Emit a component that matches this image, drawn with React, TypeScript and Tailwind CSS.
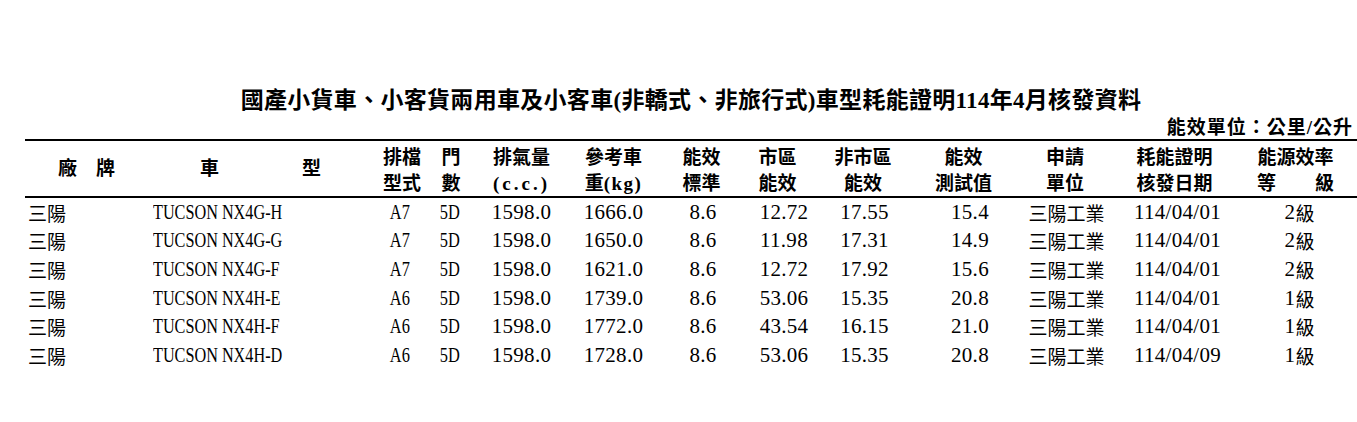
import React from 'react';

const COLS =
  'grid grid-cols-[123px_222px_60px_40px_103px_81px_98px_64px_97px_114px_79px_143px_101px]';

const SERIF = "font-['Liberation_Serif','Noto_Sans_CJK_TC',serif]";
const CJK = "font-['Noto_Sans_CJK_TC','Noto_Sans_CJK_JP',sans-serif]";

type Row = {
  model: string;
  gear: string;
  weight: string;
  city: string;
  highway: string;
  test: string;
  date: string;
  grade: string;
};

const ROWS: Row[] = [
  { model: 'TUCSON NX4G-H', gear: 'A7', weight: '1666.0', city: '12.72', highway: '17.55', test: '15.4', date: '114/04/01', grade: '2' },
  { model: 'TUCSON NX4G-G', gear: 'A7', weight: '1650.0', city: '11.98', highway: '17.31', test: '14.9', date: '114/04/01', grade: '2' },
  { model: 'TUCSON NX4G-F', gear: 'A7', weight: '1621.0', city: '12.72', highway: '17.92', test: '15.6', date: '114/04/01', grade: '2' },
  { model: 'TUCSON NX4H-E', gear: 'A6', weight: '1739.0', city: '53.06', highway: '15.35', test: '20.8', date: '114/04/01', grade: '1' },
  { model: 'TUCSON NX4H-F', gear: 'A6', weight: '1772.0', city: '43.54', highway: '16.15', test: '21.0', date: '114/04/01', grade: '1' },
  { model: 'TUCSON NX4H-D', gear: 'A6', weight: '1728.0', city: '53.06', highway: '15.35', test: '20.8', date: '114/04/09', grade: '1' },
];

// two-line header cell
const HeadCell: React.FC<{ top: React.ReactNode; bottom: React.ReactNode; className?: string }> = ({
  top,
  bottom,
  className = '',
}) => (
  <div className={`flex flex-col items-center ${className}`}>
    <div className="h-[26px] flex items-center">{top}</div>
    <div className="h-[26px] flex items-center">{bottom}</div>
  </div>
);

const Num: React.FC<{ children: React.ReactNode }> = ({ children }) => (
  <span className={`${SERIF} text-[21px] leading-none tracking-[0.3px]`}>{children}</span>
);

export default function App() {
  return (
    <div className="w-[1357px] h-[422px] bg-white text-black pl-[25px] pt-[85px] overflow-hidden">
      {/* title */}
      <h1 className={`${SERIF} h-[30px] flex items-center justify-center text-[23px] font-bold leading-none tracking-[0.3px]`}>
        國產小貨車、小客貨兩用車及小客車(非轎式、非旅行式)車型耗能證明114年4月核發資料
      </h1>
      <div className={`${SERIF} h-[24px] flex items-center justify-end pr-[4px] text-[19px] font-bold leading-none tracking-[1px]`}>
        能效單位：公里/公升
      </div>

      <div className="h-[2px] bg-black" />

      {/* header */}
      <div className={`${COLS} ${SERIF} pt-[3px] h-[55px] text-[19px] font-bold leading-none`}>
        <div className="flex items-center justify-center gap-[19px] pb-[3px]">
          <span>廠</span>
          <span>牌</span>
        </div>
        <div className="flex items-center justify-between pl-[52px] pr-[49px] pb-[3px]">
          <span>車</span>
          <span>型</span>
        </div>
        <HeadCell top="排檔" bottom="型式" className="pl-[4px]" />
        <HeadCell top="門" bottom="數" className="pl-[2px]" />
        <HeadCell top="排氣量" bottom={<span className="tracking-[3px]">(c.c.)</span>} />
        <HeadCell
          top="參考車"
          bottom={
            <span>
              重<span className="tracking-[1.5px]">(kg)</span>
            </span>
          }
        />
        <HeadCell top="能效" bottom="標準" className="pr-[3px]" />
        <HeadCell top="市區" bottom="能效" className="pr-[13px]" />
        <HeadCell top="非市區" bottom="能效" className="pr-[3px]" />
        <HeadCell top="能效" bottom="測試值" className="pr-[13px]" />
        <HeadCell top="申請" bottom="單位" className="pr-[3px]" />
        <HeadCell top="耗能證明" bottom="核發日期" className="pr-[6px]" />
        <HeadCell
          top="能源效率"
          bottom={
            <span className="flex gap-[39px]">
              <span>等</span>
              <span>級</span>
            </span>
          }
          className="pr-[8px]"
        />
      </div>

      <div className="h-[2px] bg-black" />

      {/* rows */}
      {ROWS.map((r, i) => (
        <div key={i} className={`${COLS} h-[28.6px] items-center text-[19px] leading-none`}>
          <div className={`${CJK} pl-[3px]`}>三陽</div>
          <div className="pl-[5px]">
            <span className={`${SERIF} inline-block origin-left scale-x-[0.772] text-[21px] whitespace-nowrap`}>
              {r.model}
            </span>
          </div>
          <div className="flex justify-center">
            <span className={`${SERIF} inline-block scale-x-[0.78] text-[21px]`}>{r.gear}</span>
          </div>
          <div className="flex justify-center">
            <span className={`${SERIF} inline-block scale-x-[0.78] text-[21px]`}>5D</span>
          </div>
          <div className="flex justify-center">
            <Num>1598.0</Num>
          </div>
          <div className="flex justify-center">
            <Num>{r.weight}</Num>
          </div>
          <div className="flex justify-center">
            <Num>8.6</Num>
          </div>
          <div className="flex justify-center">
            <Num>{r.city}</Num>
          </div>
          <div className="flex justify-center">
            <Num>{r.highway}</Num>
          </div>
          <div className="flex justify-center">
            <Num>{r.test}</Num>
          </div>
          <div className={`${CJK} flex justify-center`}>三陽工業</div>
          <div className="flex justify-center">
            <Num>{r.date}</Num>
          </div>
          <div className="flex justify-center items-center">
            <Num>{r.grade}</Num>
            <span className={CJK}>級</span>
          </div>
        </div>
      ))}
    </div>
  );
}
